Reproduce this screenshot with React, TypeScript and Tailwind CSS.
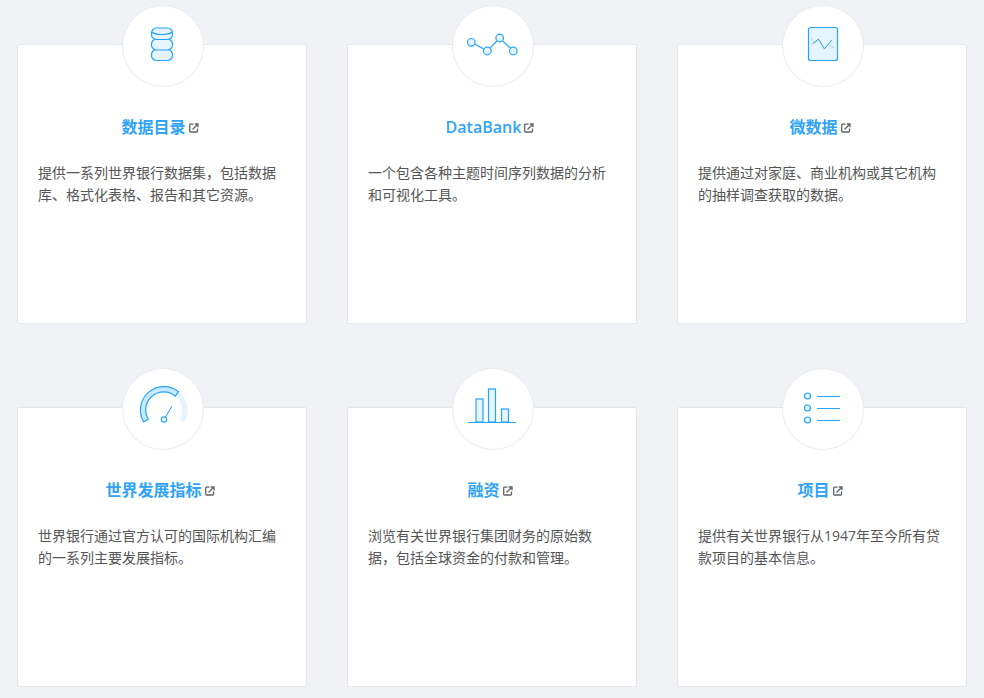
const stroke = '#24a5fd'

function DbIcon() {
  return (
    <svg width="82" height="82" viewBox="0 0 82 82" fill="none" stroke={stroke} strokeWidth="1.200">
      <rect x="29.500" y="44.500" width="21" height="11" rx="5" fill="#e5f4ff" />
      <rect x="29.500" y="34" width="21" height="11" rx="5" fill="#e5f4ff" />
      <rect x="29.500" y="23" width="21" height="11.500" rx="5" fill="#e5f4ff" />
      <path d="M30 27c1.500 1.600 5 2.500 10 2.500s8.500-.9 10-2.500" />
    </svg>
  )
}

function LineIcon() {
  return (
    <svg width="82" height="82" viewBox="0 0 82 82" fill="none" stroke={stroke} strokeWidth="1.200">
      <path d="M19.300 37.300 35.300 46 47.700 33 61.300 46" />
      <circle cx="19.300" cy="37.300" r="3.800" fill="#e5f4ff" />
      <circle cx="35.300" cy="46" r="3.800" fill="#e5f4ff" />
      <circle cx="47.700" cy="33" r="3.800" fill="#e5f4ff" />
      <circle cx="61.300" cy="46" r="3.800" fill="#e5f4ff" />
    </svg>
  )
}

function ChartIcon() {
  return (
    <svg width="82" height="82" viewBox="0 0 82 82" fill="none">
      <rect x="26.500" y="22.500" width="29" height="33" rx="2" fill="#e5f4ff" stroke={stroke} strokeWidth="1.200" />
      <path d="M29 33 33 38.300 37 34.700 42.300 42.300 46.300 39.700 52.300 43" stroke="#a9d8f7" />
      <path d="M30.300 39 36.300 34 42.300 44 49.700 35" stroke="#4d9fdb" />
    </svg>
  )
}

function GaugeIcon() {
  return (
    <svg width="82" height="82" viewBox="0 0 82 82" fill="none">
      <path d="M56.500 23.600A23.500 23.500 0 0 1 62.300 54L57.700 51.300A18 18 0 0 0 53.300 28.200Z" fill="#e5f4ff" />
      <path d="M21.700 54A23.500 23.500 0 0 1 56.500 23.600L53.300 28.200A18 18 0 0 0 26.300 51.300Z" fill="#c9e9ff" stroke={stroke} strokeWidth="1.200" />
      <circle cx="42" cy="51.500" r="2.600" fill="#fff" stroke={stroke} strokeWidth="1.200" />
      <path d="M43.500 49.200 50 38" stroke={stroke} />
    </svg>
  )
}

function BarsIcon() {
  return (
    <svg width="82" height="82" viewBox="0 0 82 82" fill="none" stroke={stroke} strokeWidth="1.200">
      <rect x="24" y="31" width="7" height="23" fill="#e5f4ff" />
      <rect x="36.500" y="21" width="7" height="33" fill="#e5f4ff" />
      <rect x="49.500" y="41" width="7" height="13" fill="#e5f4ff" />
      <path d="M16 54.500H64" />
    </svg>
  )
}

function ListIcon() {
  return (
    <svg width="82" height="82" viewBox="0 0 82 82" fill="none" stroke={stroke} strokeWidth="1.200">
      <circle cx="25.500" cy="28" r="3" fill="#e5f4ff" />
      <circle cx="25.500" cy="40" r="3" fill="#e5f4ff" />
      <circle cx="25.500" cy="52" r="3" fill="#e5f4ff" />
      <path d="M35 28.500H58M35 40.500H58M35 52.500H58" />
    </svg>
  )
}

function ExternalIcon() {
  return (
    <svg width="10" height="10" viewBox="0 0 10 10" fill="none" stroke="#5f6468" strokeWidth="1.300" className="ml-[3px] mr-1 mt-[1px] shrink-0">
      <path d="M4.500 1.200H1.400a.7.7 0 0 0-.7.7v6.400a.7.7 0 0 0 .7.7h6.400a.7.7 0 0 0 .7-.7V5.500" />
      <path d="M3.500 6.500 8.500 1.500M5.800 1h3.200v3.200" />
    </svg>
  )
}

const cards = [
  { title: '数据目录', text: '提供一系列世界银行数据集，包括数据库、格式化表格、报告和其它资源。', icon: <DbIcon /> },
  { title: 'DataBank', text: '一个包含各种主题时间序列数据的分析和可视化工具。', icon: <LineIcon /> },
  { title: '微数据', text: '提供通过对家庭、商业机构或其它机构的抽样调查获取的数据。', icon: <ChartIcon /> },
  { title: '世界发展指标', text: '世界银行通过官方认可的国际机构汇编的一系列主要发展指标。', icon: <GaugeIcon /> },
  { title: '融资', text: '浏览有关世界银行集团财务的原始数据，包括全球资金的付款和管理。', icon: <BarsIcon /> },
  { title: '项目', text: '提供有关世界银行从1947年至今所有贷款项目的基本信息。', icon: <ListIcon /> },
]

export default function App() {
  return (
    <div className="min-h-[698px] bg-[#f0f2f6] pt-[44px] pl-[17px] font-['Open_Sans','Noto_Sans_CJK_SC',sans-serif]">
      <div className="grid w-[950px] grid-cols-3 gap-x-10 gap-y-[83px]">
        {cards.map((c) => (
          <div key={c.title} className="relative h-[280px] rounded-[2px] border border-[#e3e6ea] bg-white px-5 pt-[70px]">
            {/* 丸アイコン */}
            <div className="absolute left-[104px] top-[-40px] h-[82px] w-[82px] rounded-full border border-[#e8ebef] bg-white">
              <div className="-m-px">{c.icon}</div>
            </div>
            <div className="flex h-6 items-center justify-center text-base font-semibold text-[#2ea3f9]">
              <span>{c.title}</span>
              <ExternalIcon />
            </div>
            <p className="mt-[23px] text-sm leading-[22.4px] text-[#555]">{c.text}</p>
          </div>
        ))}
      </div>
    </div>
  )
}
